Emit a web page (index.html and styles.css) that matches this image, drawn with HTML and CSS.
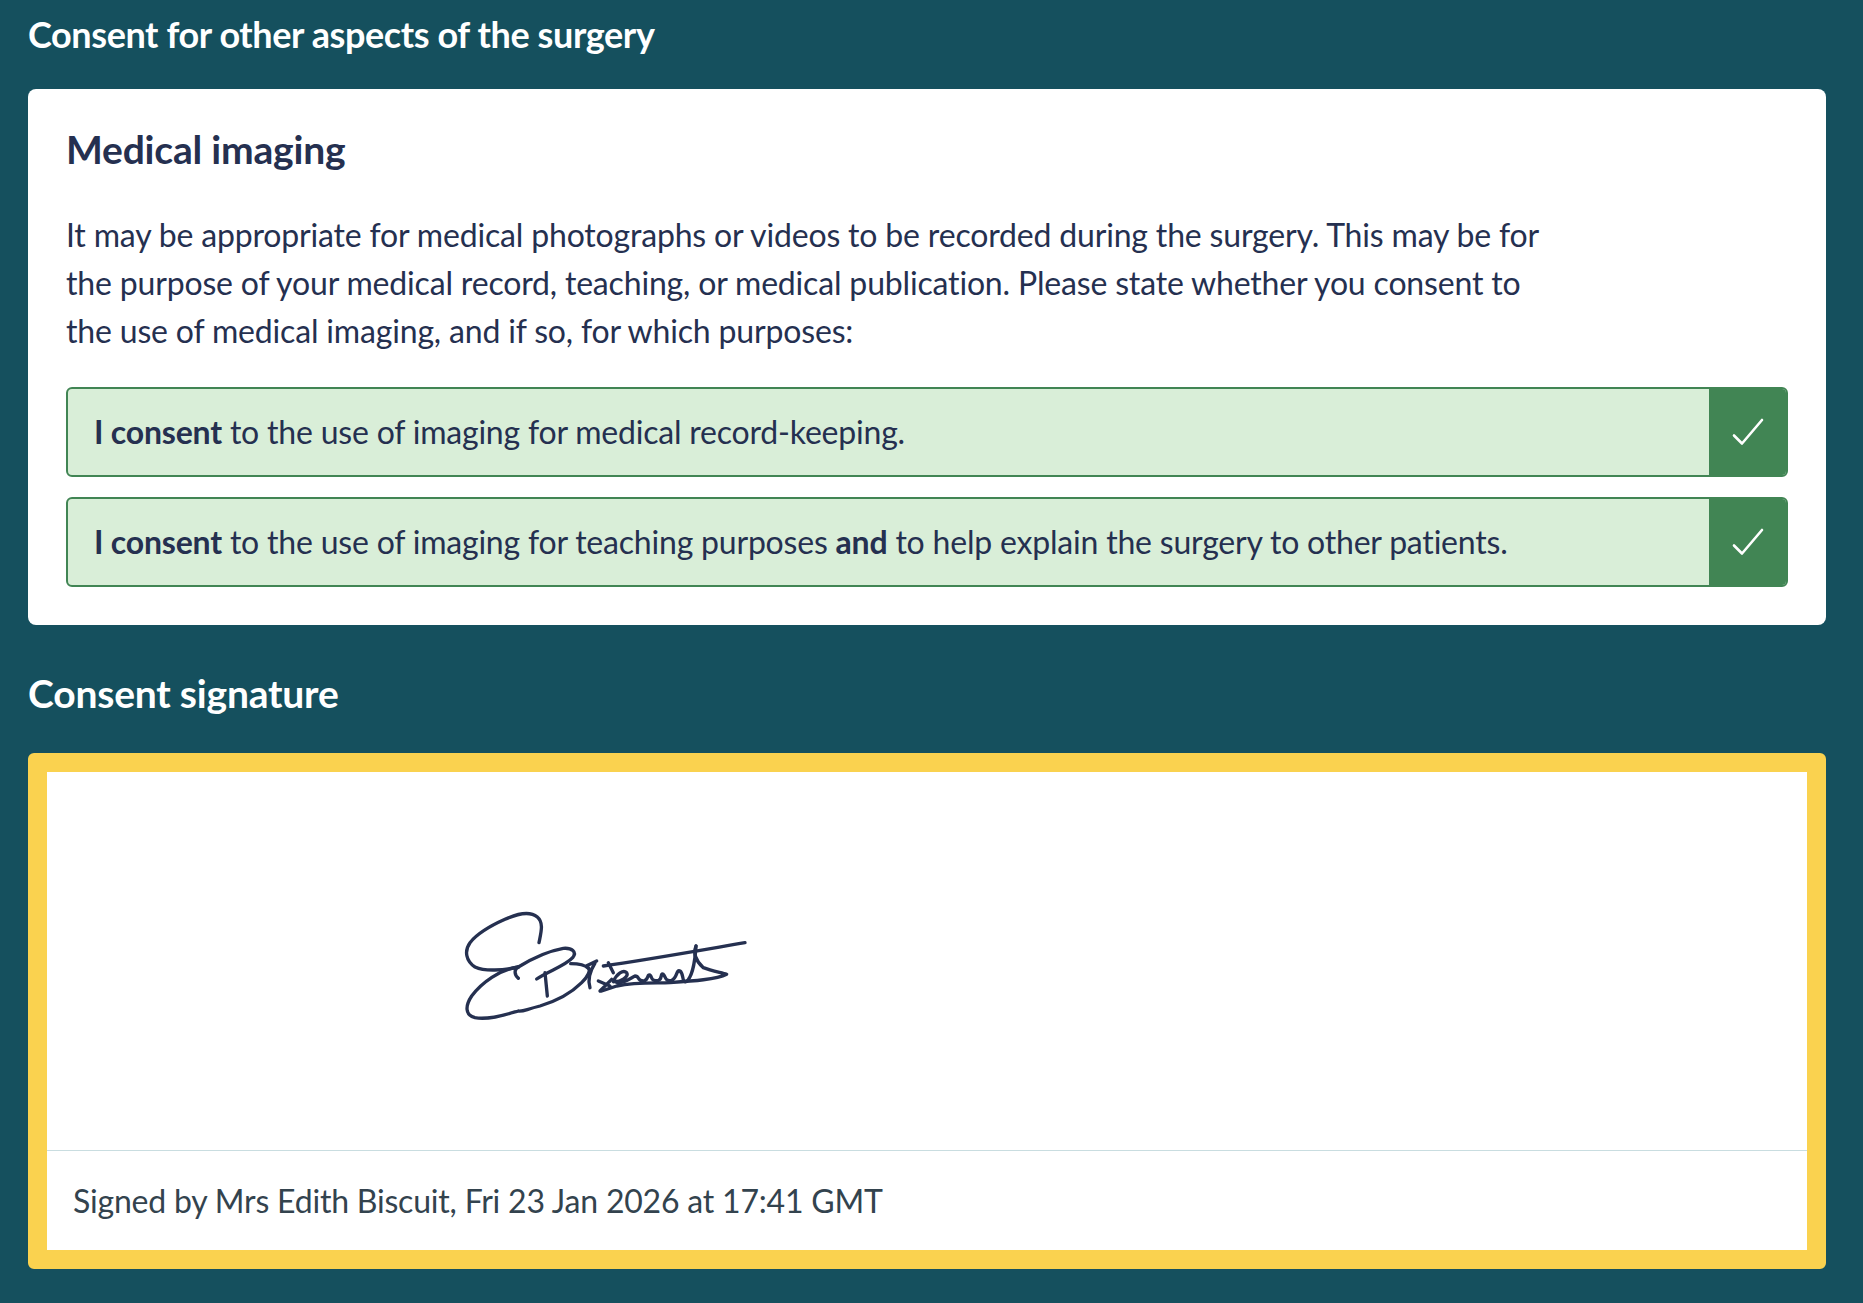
FILE: index.html
```html
<!DOCTYPE html>
<html lang="en">
<head>
  <meta charset="UTF-8">
  <meta name="viewport" content="width=device-width, initial-scale=1.0">
  <title>Consent</title>
  <link rel="stylesheet" href="styles.css">
</head>
<body>
  <div class="page">
    <h2 class="section-title first">Consent for other aspects of the surgery</h2>
    <div class="card">
      <h3>Medical imaging</h3>
      <p>It may be appropriate for medical photographs or videos to be recorded during the surgery. This may be for<br>the purpose of your medical record, teaching, or medical publication. Please state whether you consent to<br>the use of medical imaging, and if so, for which purposes:</p>
      <div class="option">
        <div class="option-text"><strong>I consent</strong> to the use of imaging for medical record-keeping.</div>
        <div class="option-check">
          <svg width="32" height="32" viewBox="0 0 32 32"><path d="M2 19.500 L10 27.500 L30 4" fill="none" stroke="#fff" stroke-width="2.600" stroke-linecap="round" stroke-linejoin="round"/></svg>
        </div>
      </div>
      <div class="option">
        <div class="option-text"><strong>I consent</strong> to the use of imaging for teaching purposes <strong>and</strong> to help explain the surgery to other patients.</div>
        <div class="option-check">
          <svg width="32" height="32" viewBox="0 0 32 32"><path d="M2 19.500 L10 27.500 L30 4" fill="none" stroke="#fff" stroke-width="2.600" stroke-linecap="round" stroke-linejoin="round"/></svg>
        </div>
      </div>
    </div>
    <h2 class="section-title">Consent signature</h2>
    <div class="signature-box">
      <div class="signature-area">
        <svg class="signature" width="320" height="150" viewBox="0 0 960 450" fill="none" stroke="#253050" stroke-width="10" stroke-linecap="round" stroke-linejoin="round">
          <path d="M297 155 C303 125 312 95 292 78 C270 60 232 68 195 85 C150 105 110 130 90 155 C72 180 78 210 105 228 C135 242 190 238 235 228 C222 235 222 250 235 262"/>
          <path d="M235 228 C180 235 125 275 95 315 C75 345 75 372 105 380 C145 388 200 370 235 360 C250 362 255 356 300 345 C350 330 395 305 425 275 C445 255 452 238 445 230"/>
          <path d="M290 264 C325 240 375 225 398 200 C412 182 395 170 370 172 C325 180 280 200 235 228"/>
          <path d="M315 245 L322 315"/>
          <path d="M392 218 C415 218 435 222 445 232"/>
          <path d="M450 290 C443 268 450 240 465 216 M440 224 L470 210"/>
          <path d="M490 225 C610 208 780 178 915 155"/>
          <path d="M505 215 L520 245 M475 270 L510 285 M480 300 L515 265"/>
          <path d="M520 272 C530 248 550 235 560 245 C568 258 540 272 525 272 C545 282 570 262 585 255 C600 255 590 272 612 270 C625 268 622 248 630 252 C638 258 630 272 655 268 C668 264 660 245 670 250 C678 258 675 272 695 268 C712 262 708 235 720 240 C732 248 725 275 738 272 C755 262 765 215 768 165"/>
          <path d="M768 165 C760 185 762 205 790 230 C815 240 845 245 860 250 C830 265 760 270 690 275 C650 277 590 272 530 285 L485 300"/>
        </svg>
      </div>
      <div class="signature-caption">Signed by Mrs Edith Biscuit, Fri 23 Jan 2026 at 17:41 GMT</div>
    </div>
  </div>
</body>
</html>
```

FILE: styles.css
```css
body { margin: 0; background: #15505e; font-family: Lato, "Open Sans", sans-serif; color: #253050; font-variant-ligatures: none; letter-spacing: -0.2px; }
.page { padding: 0 37px 34px 28px; }
.section-title { margin: 0; padding-top: 46px; font-size: 39px; line-height: 44px; font-weight: 700; color: #fff; }
.section-title.first { padding-top: 12px; font-size: 36px; letter-spacing: -0.4px; }
.card { margin-top: 33px; padding: 36px 38px 38px; background: #fff; border-radius: 8px; }
.section-title + .signature-box { margin-top: 38px; }
.card h3 { margin: 0; font-size: 39px; line-height: 48px; font-weight: 700; }
.card p { margin: 38px 0 0; font-size: 32px; line-height: 48px; letter-spacing: -0.17px; }
.option { display: flex; height: 90px; box-sizing: border-box; margin-top: 20px; border: 2px solid #418554; border-radius: 6px; background: #d9eed8; font-size: 32px; overflow: hidden; }
.card p + .option { margin-top: 32px; }
.option-text { flex: 1; display: block; line-height: 86px; white-space: pre-wrap; padding-left: 26px; }
.option-check { width: 77px; display: flex; align-items: center; justify-content: center; background: #418554; }
.signature-box { border: 19px solid #fad24f; border-radius: 6px; background: #fff; }
.signature-area { height: 379px; box-sizing: border-box; padding: 119px 0 0 393px; border-bottom: 1px solid #c9dde0; }
.signature { display: block; }
.signature-caption { height: 99px; display: flex; align-items: center; padding-left: 26px; font-size: 32px; color: #33434e; }
```
